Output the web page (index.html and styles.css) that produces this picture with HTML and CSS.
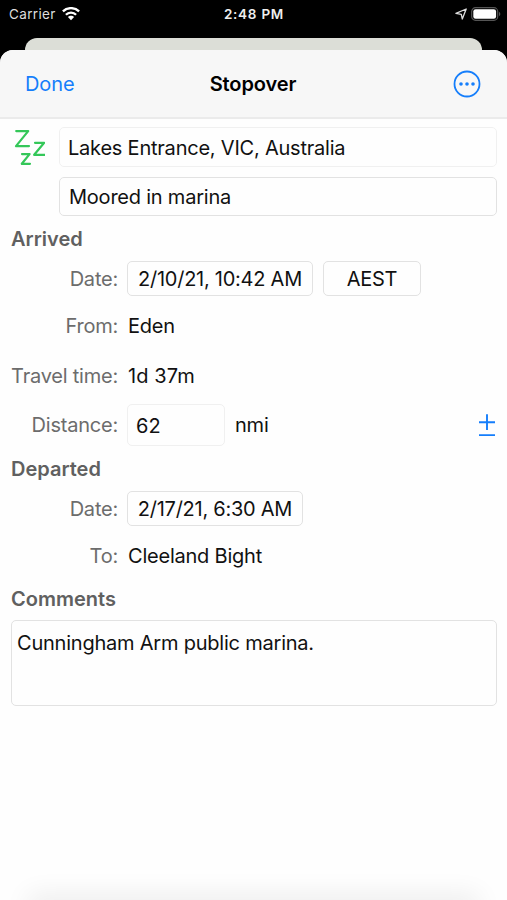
FILE: index.html
```html
<!DOCTYPE html>
<html lang="en">
<head>
<meta charset="utf-8">
<title>Stopover</title>
<link rel="stylesheet" href="styles.css">
</head>
<body>
<header class="status">
  <div class="carrier"><span>Carrier</span>
    <svg width="18" height="14" viewBox="0 0 18 14" fill="none" stroke="#fff" stroke-width="2.3"><path d="M.9 4.4C5.3 0 12.7 0 17.1 4.4"/><path d="M3.9 7.7C6.7 4.8 11.3 4.8 14.1 7.7"/><path d="M9 13.2L5.9 10C7.5 8.3 10.5 8.3 12.1 10Z" fill="#fff" stroke="none"/></svg>
  </div>
  <div class="clock">2:48 PM</div>
  <div class="indicators">
    <svg width="12" height="12" viewBox="0 0 12 12" fill="none" stroke="#ddd" stroke-width="1.3" stroke-linejoin="round"><path d="M11.2 1L7.3 11L6.3 6.3L.9 5.4Z"/></svg>
    <svg width="30" height="14" viewBox="0 0 30 14"><rect x=".7" y=".7" width="26" height="12.6" rx="3.8" fill="#000" stroke="#555" stroke-width="1.2"/><rect x="2.3" y="2.3" width="22.8" height="9.4" rx="2.3" fill="#fff"/><path d="M28 4.8C29.8 5.7 29.8 8.3 28 9.2Z" fill="#555"/></svg>
  </div>
</header>
<div class="back-sheet"></div>
<main class="sheet">
  <nav class="navbar">
    <span class="done">Done</span>
    <h1>Stopover</h1>
    <svg class="more" width="28" height="28" viewBox="0 0 28 28"><circle cx="14" cy="14" r="12.5" fill="none" stroke="#157efb" stroke-width="1.8"/><g fill="#157efb"><circle cx="8" cy="14" r="1.8"/><circle cx="14" cy="14" r="1.8"/><circle cx="20" cy="14" r="1.8"/></g></svg>
  </nav>
  <div class="form">
    <section class="place">
      <svg class="zzz" width="34" height="38" viewBox="0 0 34 38" fill="none" stroke="#34c759" stroke-width="2.2" stroke-linejoin="round" stroke-linecap="round"><path d="M5.2 2.1H17.2L5 17.1H18"/><path d="M24 13.8H33.2L23.2 25.8H33.8"/><path d="M11 25.1H18.6L10.8 34.8H19"/></svg>
      <div class="fields">
        <div class="box name faint">Lakes Entrance, VIC, Australia</div>
        <div class="box mooring">Moored in marina</div>
      </div>
    </section>
    <h2>Arrived</h2>
    <div class="row date"><span class="label">Date:</span><div class="box arrival">2/10/21, 10:42 AM</div><div class="box zone">AEST</div></div>
    <div class="row plain"><span class="label">From:</span><span>Eden</span></div>
    <div class="row plain"><span class="label">Travel time:</span><span class="duration">1d 37m</span></div>
    <div class="row distance"><span class="label">Distance:</span><div class="box number faint">62</div><span>nmi</span>
      <svg class="plusminus" width="18" height="24" viewBox="0 0 18 24" fill="none" stroke="#157efb" stroke-width="1.9"><path d="M1 9.3H17M9 1.2V17M1 22.1H17"/></svg>
    </div>
    <h2>Departed</h2>
    <div class="row date"><span class="label">Date:</span><div class="box departure">2/17/21, 6:30 AM</div></div>
    <div class="row plain"><span class="label">To:</span><span>Cleeland Bight</span></div>
    <h2 class="comments-title">Comments</h2>
    <div class="box comments">Cunningham Arm public marina.</div>
  </div>
  <div class="bottom-shade"></div>
</main>
</body>
</html>
```
FILE: styles.css
```css
* { box-sizing: border-box; }
body {
  margin: 0;
  height: 900px;
  display: flex;
  flex-direction: column;
  overflow: hidden;
  background: #000;
  color: #111;
  font: 20px/24px Inter, "Liberation Sans", sans-serif;
  letter-spacing: -0.22px;
  white-space: nowrap;
}
svg { display: block; flex: none; }
.status {
  height: 38px;
  padding: 4px 6px 14px 9px;
  display: grid;
  grid-template-columns: 1fr auto 1fr;
  align-items: center;
  color: #fff;
  font-size: 13.5px;
  line-height: 20px;
  letter-spacing: 0.35px;
}
.carrier { display: flex; align-items: center; gap: 6px; color: #ddd; }
.clock { position: relative; left: -1px; font-weight: 600; letter-spacing: 0.75px; color: #eee; }
.indicators { display: flex; align-items: center; justify-content: flex-end; gap: 4px; }
.back-sheet {
  height: 24px;
  margin: 0 25px -12px;
  border-radius: 12px 12px 0 0;
  background: #dcded7;
}
.sheet {
  position: relative;
  flex: 1;
  border-radius: 13px 13px 0 0;
  background: #fefefe;
  overflow: hidden;
}
.navbar {
  height: 69px;
  padding: 1px 26px 0 25px;
  display: grid;
  grid-template-columns: 1fr auto 1fr;
  align-items: center;
  background: #f7f7f7;
  border-bottom: 2px solid #ebebeb;
}
.done { color: #157efb; letter-spacing: -0.1px; }
h1 { margin: 0; font-size: 20px; line-height: 24px; font-weight: 600; color: #000; letter-spacing: -0.1px; }
.more { justify-self: end; }
.form { padding: 8px 10px 0 11px; }
.place { display: flex; gap: 14px; }
.zzz { margin-top: 2px; }
.fields { flex: 1; display: flex; flex-direction: column; gap: 10px; }
.box {
  display: flex;
  align-items: center;
  border: 1px solid #e2e2e2;
  border-radius: 5px;
}
.faint { border-color: #f0f0f0; }
.name { height: 40px; padding: 2px 8px 0; }
.mooring { height: 39px; padding: 1px 9px 0; }
h2 {
  margin: 0;
  height: 45px;
  display: flex;
  align-items: center;
  font-size: 20px;
  font-weight: 600;
  letter-spacing: 0;
  color: #606060;
}
.row { display: flex; align-items: center; gap: 10px; }
.label { width: 107px; margin-right: -1px; text-align: right; color: #6c6c6c; }
.date { height: 35px; margin-bottom: 5px; }
.date .box { height: 35px; justify-content: center; letter-spacing: -0.25px; }
.date .arrival { width: 186px; }
.departure { width: 176px; }
.zone { width: 98px; }
.plain { height: 50px; gap: 11px; }
.duration { letter-spacing: 0.1px; }
.distance { height: 42px; margin-top: 3px; padding-top: 0; }
.number { width: 98px; height: 42px; padding: 1px 0 0 8px; letter-spacing: 0; }
.plusminus { margin-left: auto; margin-right: 1px; }
h2.comments-title { height: 35px; margin-bottom: 4px; }
.comments { height: 86px; align-items: flex-start; padding: 10px 5px; }
.bottom-shade {
  position: absolute;
  left: 34px;
  right: 34px;
  bottom: -14px;
  height: 14px;
  box-shadow: 0 0 26px 6px rgba(0, 0, 0, 0.07);
}
```
